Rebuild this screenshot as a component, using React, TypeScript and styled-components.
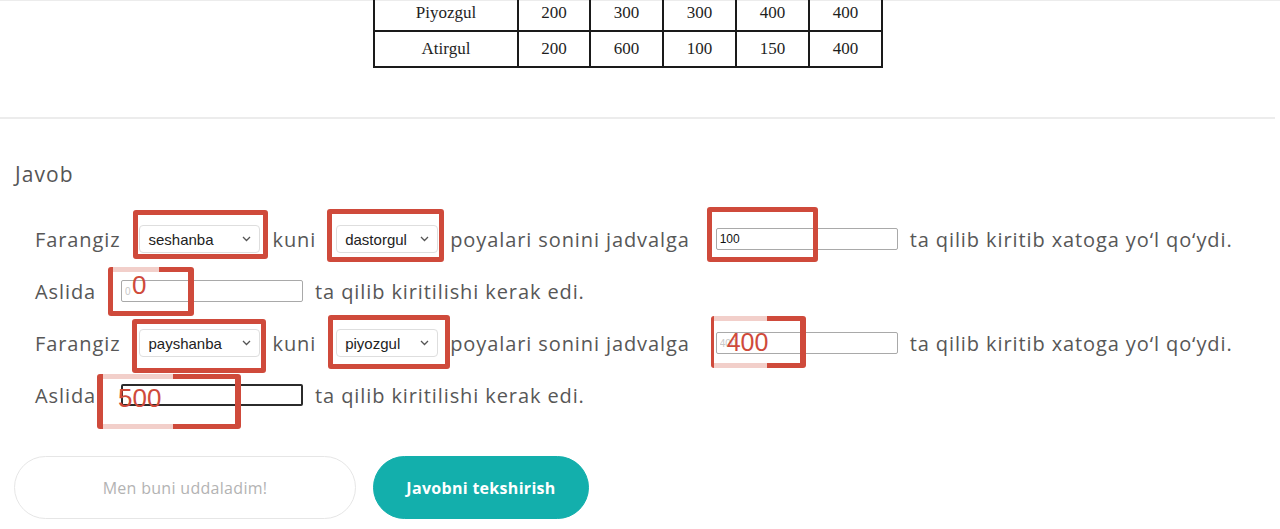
import React from "react";
import styled, { createGlobalStyle } from "styled-components";

const RED = "#cf4a3b";
const PINK = "#f2cfca";

const GlobalStyle = createGlobalStyle`
    html, body {
        margin: 0;
        padding: 0;
        background: #ffffff;
    }
    body {
        font-family: "Open Sans", "Noto Sans", sans-serif;
        color: #5a5a5a;
    }
`;

const Page = styled.div`
    width: 1280px;
    height: 529px;
    overflow: hidden;
    background: #fff;
`;

const TopSection = styled.section`
    height: 117px;
    border-top: 1px solid #ececec;
    padding-left: 373px;
    box-sizing: border-box;
`;

const Table = styled.table`
    border-collapse: collapse;
    font-family: "Liberation Serif", "Times New Roman", serif;
    font-size: 17px;
    color: #1e1e1e;
    margin-top: -1px;
`;

const Cell = styled.td<{ $w: number; $top?: boolean }>`
    width: ${(p) => p.$w}px;
    height: ${(p) => (p.$top ? "31px" : "36px")};
    border: 2px solid #1a1a1a;
    border-top-width: ${(p) => (p.$top ? "0" : "2px")};
    text-align: center;
    padding: ${(p) => (p.$top ? "0 0 4px" : "0")};
    box-sizing: border-box;
`;

const Divider = styled.hr`
    margin: 0 5px 0 0;
    height: 2px;
    border: none;
    background: #ececec;
`;

const AnswerSection = styled.section`
    padding: 0 15px;
`;

const Heading = styled.h3`
    margin: 43px 0 0;
    font-size: 21px;
    line-height: 24px;
    font-weight: 400;
    color: #555;
    letter-spacing: 1.1px;
`;

const Rows = styled.div`
    margin-top: 27px;
    padding-left: 20px;
`;

const Row = styled.div`
    display: flex;
    align-items: center;
    height: 52px;
    font-size: 20px;
    letter-spacing: 0.9px;
    white-space: nowrap;
`;

const Word = styled.span`
    color: #575757;
`;

const Field = styled.span<{ $ml: number }>`
    position: relative;
    display: inline-flex;
    margin-left: ${(p) => p.$ml}px;
    margin-right: 12px;
    letter-spacing: 0;
`;

const Select = styled.select<{ $w: number }>`
    appearance: none;
    width: ${(p) => p.$w}px;
    height: 28px;
    border: 1px solid #dedede;
    border-radius: 4px;
    background: #fff;
    font-family: "Liberation Sans", Arial, sans-serif;
    font-size: 15px;
    color: #222;
    padding: 0 0 0 8px;
    box-sizing: border-box;
`;

const Chevron = styled.svg`
    position: absolute;
    right: 9px;
    top: 11px;
    pointer-events: none;
`;

const Input = styled.input<{ $focused?: boolean }>`
    width: 182px;
    height: 22px;
    box-sizing: border-box;
    border: ${(p) => (p.$focused ? "2px solid #2b2b2b" : "1px solid #a9a9a9")};
    border-radius: 2px;
    font-family: "Liberation Sans", Arial, sans-serif;
    font-size: 12px;
    color: #111;
    padding: 0 3px;
    background: #fff;
    &::placeholder {
        color: #c8c8c8;
        font-size: 10px;
    }
`;

const Mark = styled.span<{ $l: number; $t: number; $w: number; $h: number }>`
    position: absolute;
    left: ${(p) => p.$l}px;
    top: ${(p) => p.$t}px;
    width: ${(p) => p.$w}px;
    height: ${(p) => p.$h}px;
    border: 5px solid ${RED};
    border-radius: 3px;
    box-sizing: border-box;
    pointer-events: none;
`;

const Bracket = styled.span<{
    $l: number;
    $t: number;
    $w: number;
    $h: number;
    $lw: number;
    $split: number;
    $bottomPink?: boolean;
}>`
    position: absolute;
    left: ${(p) => p.$l}px;
    top: ${(p) => p.$t}px;
    width: ${(p) => p.$w}px;
    height: ${(p) => p.$h}px;
    border-left: ${(p) => p.$lw}px solid ${RED};
    border-right: 6px solid ${RED};
    border-radius: 3px;
    box-sizing: border-box;
    pointer-events: none;
    &::before,
    &::after {
        content: "";
        position: absolute;
        left: 0;
        right: 0;
        height: 5px;
        background: linear-gradient(
            to right,
            ${PINK} ${(p) => p.$split}%,
            ${RED} ${(p) => p.$split}%
        );
    }
    &::before {
        top: 0;
    }
    &::after {
        bottom: 0;
        background: ${(p) =>
            p.$bottomPink
                ? `linear-gradient(to right, ${PINK} ${p.$split}%, ${RED} ${p.$split}%)`
                : RED};
    }
`;

const RedValue = styled.span<{ $l: number; $t: number; $size: number }>`
    position: absolute;
    left: ${(p) => p.$l}px;
    top: ${(p) => p.$t}px;
    font-family: "Liberation Sans", Arial, sans-serif;
    font-size: ${(p) => p.$size}px;
    line-height: 1;
    color: ${RED};
    pointer-events: none;
`;

const Actions = styled.div`
    display: flex;
    gap: 17px;
    margin-top: 35px;
    margin-left: -1px;
`;

const Button = styled.button<{ $primary?: boolean }>`
    height: 63px;
    padding: 0 30px;
    min-width: ${(p) => (p.$primary ? "216px" : "342px")};
    border-radius: 32px;
    border: 1px solid ${(p) => (p.$primary ? "#13afac" : "#e6e6e6")};
    background: ${(p) => (p.$primary ? "#13afac" : "#fff")};
    color: ${(p) => (p.$primary ? "#fff" : "#b3b3b3")};
    font-family: "Open Sans", "Noto Sans", sans-serif;
    font-size: 16px;
    letter-spacing: 0.3px;
    font-weight: ${(p) => (p.$primary ? 700 : 400)};
`;

function ChevronIcon() {
    return (
        <Chevron width="9" height="6" viewBox="0 0 9 6">
            <path d="M1 1l3.5 3.5L8 1" fill="none" stroke="#555" strokeWidth="1.3" />
        </Chevron>
    );
}

function DropDown({ value, width, ml, children }: { value: string; width: number; ml: number; children?: React.ReactNode }) {
    return (
        <Field $ml={ml}>
            <Select $w={width} defaultValue={value}>
                <option>{value}</option>
            </Select>
            <ChevronIcon />
            {children}
        </Field>
    );
}

const colWidths = [144, 72, 73, 73, 73, 73];

const tableRows = [
    ["Piyozgul", "200", "300", "300", "400", "400"],
    ["Atirgul", "200", "600", "100", "150", "400"],
];

export default function App() {
    return (
        <Page>
            <GlobalStyle />
            <TopSection>
                <Table>
                    <tbody>
                        {tableRows.map((r, i) => (
                            <tr key={r[0]}>
                                {r.map((c, j) => (
                                    <Cell key={j} $w={colWidths[j]} $top={i === 0}>
                                        {c}
                                    </Cell>
                                ))}
                            </tr>
                        ))}
                    </tbody>
                </Table>
            </TopSection>
            <Divider />
            <AnswerSection>
                <Heading>Javob</Heading>
                <Rows>
                    <Row>
                        <Word>Farangiz</Word>
                        <DropDown value="seshanba" width={121} ml={19}>
                            <Mark $l={-6} $t={-15} $w={135} $h={49} />
                        </DropDown>
                        <Word>kuni</Word>
                        <DropDown value="dastorgul" width={102} ml={20}>
                            <Mark $l={-9} $t={-16} $w={117} $h={53} />
                        </DropDown>
                        <Word>poyalari sonini jadvalga</Word>
                        <Field $ml={26}>
                            <Input defaultValue="100" />
                            <Mark $l={-9} $t={-21} $w={111} $h={55} />
                        </Field>
                        <Word>ta qilib kiritib xatoga yo‘l qo‘ydi.</Word>
                    </Row>
                    <Row>
                        <Word>Aslida</Word>
                        <Field $ml={25}>
                            <Input placeholder="0" />
                            <Bracket $l={-13} $t={-13} $w={86} $h={49} $lw={5} $split={62} />
                            <RedValue $l={11} $t={-8} $size={26}>0</RedValue>
                        </Field>
                        <Word>ta qilib kiritilishi kerak edi.</Word>
                    </Row>
                    <Row>
                        <Word>Farangiz</Word>
                        <DropDown value="payshanba" width={121} ml={19}>
                            <Mark $l={-7} $t={-10} $w={134} $h={54} />
                        </DropDown>
                        <Word>kuni</Word>
                        <DropDown value="piyozgul" width={102} ml={20}>
                            <Mark $l={-8} $t={-14} $w={122} $h={54} />
                        </DropDown>
                        <Word>poyalari sonini jadvalga</Word>
                        <Field $ml={26}>
                            <Input placeholder="400" />
                            <Bracket $l={-5} $t={-16} $w={95} $h={52} $lw={3} $split={62} $bottomPink />
                            <RedValue $l={11} $t={-2} $size={25}>400</RedValue>
                        </Field>
                        <Word>ta qilib kiritib xatoga yo‘l qo‘ydi.</Word>
                    </Row>
                    <Row>
                        <Word>Aslida</Word>
                        <Field $ml={25}>
                            <Input $focused />
                            <Bracket $l={-24} $t={-10} $w={144} $h={55} $lw={6} $split={53} $bottomPink />
                            <RedValue $l={-3} $t={1} $size={26}>500</RedValue>
                        </Field>
                        <Word>ta qilib kiritilishi kerak edi.</Word>
                    </Row>
                </Rows>
                <Actions>
                    <Button>Men buni uddaladim!</Button>
                    <Button $primary>Javobni tekshirish</Button>
                </Actions>
            </AnswerSection>
        </Page>
    );
}
